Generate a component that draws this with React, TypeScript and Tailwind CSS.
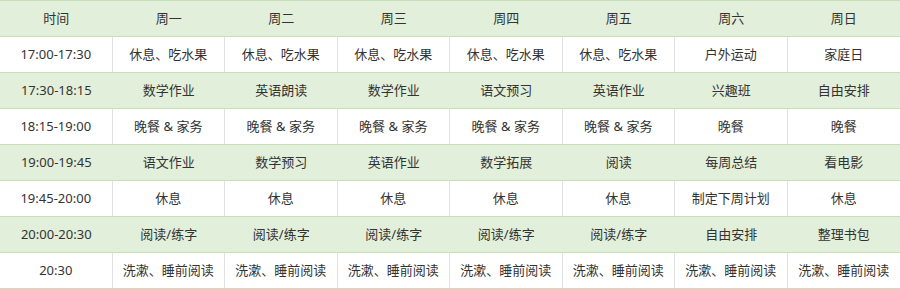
const days = ['周一', '周二', '周三', '周四', '周五', '周六', '周日'];

const rows: { time: string; items: string[] }[] = [
  { time: '17:00-17:30', items: ['休息、吃水果', '休息、吃水果', '休息、吃水果', '休息、吃水果', '休息、吃水果', '户外运动', '家庭日'] },
  { time: '17:30-18:15', items: ['数学作业', '英语朗读', '数学作业', '语文预习', '英语作业', '兴趣班', '自由安排'] },
  { time: '18:15-19:00', items: ['晚餐 & 家务', '晚餐 & 家务', '晚餐 & 家务', '晚餐 & 家务', '晚餐 & 家务', '晚餐', '晚餐'] },
  { time: '19:00-19:45', items: ['语文作业', '数学预习', '英语作业', '数学拓展', '阅读', '每周总结', '看电影'] },
  { time: '19:45-20:00', items: ['休息', '休息', '休息', '休息', '休息', '制定下周计划', '休息'] },
  { time: '20:00-20:30', items: ['阅读/练字', '阅读/练字', '阅读/练字', '阅读/练字', '阅读/练字', '自由安排', '整理书包'] },
  { time: '20:30', items: ['洗漱、睡前阅读', '洗漱、睡前阅读', '洗漱、睡前阅读', '洗漱、睡前阅读', '洗漱、睡前阅读', '洗漱、睡前阅读', '洗漱、睡前阅读'] },
];

export default function App() {
  return (
    <div
      className="w-[900px] h-[289px] bg-white text-[13px] text-[#333]"
      style={{ fontFamily: '"Noto Sans", "Noto Sans CJK SC", sans-serif' }}
    >
      <div className="grid grid-cols-8 h-[37px] bg-[#e2efda] border-t border-b border-[#c6e0b4] items-center text-center">
        <div>时间</div>
        {days.map((d) => (
          <div key={d}>{d}</div>
        ))}
      </div>
      {rows.map((r, i) => {
        const green = i % 2 === 1;
        return (
          <div
            key={r.time}
            className={
              green
                ? 'grid grid-cols-8 h-[36px] bg-[#e2efda] border-b border-[#c6e0b4] text-center'
                : 'grid grid-cols-8 h-[36px] bg-white border-b border-[#c6e0b4] text-center'
            }
          >
            {[r.time, ...r.items].map((t, j) => (
              <div
                key={j}
                className={
                  green || j === 7
                    ? 'flex items-center justify-center'
                    : 'flex items-center justify-center border-r border-[#e0e0e0]'
                }
              >
                {t}
              </div>
            ))}
          </div>
        );
      })}
    </div>
  );
}
